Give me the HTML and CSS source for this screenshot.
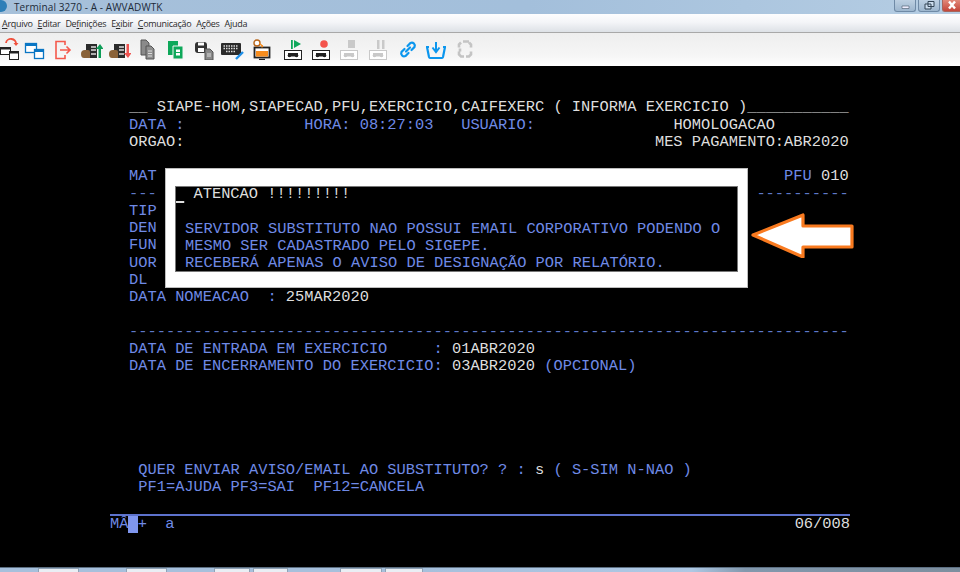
FILE: index.html
```html
<!DOCTYPE html>
<html lang="pt">
<head>
<meta charset="utf-8">
<title>Terminal 3270</title>
<link rel="stylesheet" href="styles.css">
</head>
<body>
<svg class="defs" width="0" height="0">
  <defs>
    <g id="server">
      <path d="M7 8h11v14H7z" fill="#2b2b2b"/>
      <path d="M12 11h5M12 14h5M12 18h5" stroke="#ddd" stroke-width="1.4"/>
      <path d="M2 18q0-4 4-4h3q2 0 2 2v6H5q-3 0-3-4z" fill="#8a6238"/>
    </g>
    <g id="tape">
      <rect x="3.500" y="15.500" width="17" height="9" fill="#fff" stroke="currentColor"/>
      <path d="M7 18h10v3.500H7z" fill="currentColor"/>
      <circle cx="8.500" cy="20.500" r="1.800" fill="currentColor"/>
      <circle cx="15.500" cy="20.500" r="1.800" fill="currentColor"/>
    </g>
  </defs>
</svg>
<header class="titlebar">
  <span class="appicon"></span>
  <span class="apptitle">Terminal 3270 - A - AWVADWTK</span>
  <div class="winctl">
    <span class="winbtn"><svg width="21" height="12"><path d="M7 7h7v2.500H7z" fill="#eef" stroke="#456" stroke-width=".6"/></svg></span>
    <span class="winbtn"><svg width="21" height="12"><path d="M9 2.500h6v5h-6zM6 5h6v5H6z" fill="#cde" stroke="#345"/></svg></span>
    <span class="winbtn close"><svg width="18" height="12"><path d="M6 2.500l6 7M12 2.500l-6 7" stroke="#fff" stroke-width="2.400"/></svg></span>
  </div>
</header>
<nav class="menubar">
  <span><u>A</u>rquivo</span><span><u>E</u>ditar</span><span>De<u>f</u>inições</span><span>E<u>x</u>ibir</span><span><u>C</u>omunicação</span><span>A<u>ç</u>ões</span><span>A<u>j</u>uda</span>
</nav>
<div class="toolbar">
  <span class="tool first"><svg width="24" height="24"><path d="M9 7a5 4.500 0 0 1 10 1" fill="none" stroke="#f0503c" stroke-width="1.800"/><path d="M16.500 7l2.500 3 2.500-3" fill="#f0503c"/><rect x="3.500" y="11.500" width="10" height="7" fill="#fff" stroke="#222"/><path d="M3 11h11v2.500H3z" fill="#222"/><rect x="12.500" y="15.500" width="9" height="8" fill="#fff" stroke="#222"/><path d="M12 15h10v2.500H12z" fill="#222"/></svg></span>
  <span class="tool"><svg width="24" height="24"><rect x="3.500" y="7.500" width="11" height="9" fill="#fff" stroke="#0a76c4" stroke-width="1.300"/><path d="M3 7h12v3H3z" fill="#0a76c4"/><rect x="12.500" y="13.500" width="9" height="9" fill="#fff" stroke="#0a76c4" stroke-width="1.300"/><path d="M12 13h10v3H12z" fill="#0a76c4"/></svg></span>
  <span class="tool"><svg width="24" height="24"><path d="M15 9V5.500H6v17h9V19M10 14h10M16.500 10.500L20 14l-3.500 3.500" fill="none" stroke="#f4594c" stroke-width="1.600"/></svg></span>
  <span class="tool"><svg width="24" height="24"><use href="#server"/><path d="M21 8l3.500 5H22v9h-2.500v-9H17z" fill="#0e9d58"/></svg></span>
  <span class="tool"><svg width="24" height="24"><use href="#server"/><path d="M21 22l3.500-5H22V8h-2.500v9H17z" fill="#ef5350"/></svg></span>
  <span class="tool"><svg width="24" height="24"><path d="M6 4h5l3 3v12H6z" fill="#8a8a8a" stroke="#555"/><path d="M11 10h5l3 3v10h-8z" fill="#8f8f8f" stroke="#555"/><path d="M13 15h4M13 17.500h4M13 20h4" stroke="#ddd"/></svg></span>
  <span class="tool"><svg width="24" height="24"><path d="M4 5h10v14H4z" fill="#0ea85a"/><path d="M9 10h10v13H9z" fill="#0ea85a" stroke="#f3f3f3"/><path d="M11.500 13h5v7h-5zM11.500 16.500h5" fill="#fff" stroke="#0ea85a"/></svg></span>
  <span class="tool"><svg width="24" height="24"><path d="M3 9q0-3 3-3h6q3 0 3 3v5q0 3-3 3H6q-3 0-3-3z" fill="#333"/><path d="M6 6.500h6v3H6zM6 12h6v4H6z" fill="#fff"/><path d="M13 13h5l3 3v8h-8z" fill="#888" stroke="#555"/><path d="M15 18h4M15 20h4" stroke="#ddd"/></svg></span>
  <span class="tool"><svg width="24" height="24"><rect x="1" y="7" width="20" height="12" rx="1" fill="#2b2b2b"/><path d="M3.500 10h15M3.500 12.500h15M6 15.500h10" stroke="#ddd" stroke-width="1.300" stroke-dasharray="1.500 1"/><path d="M16 23l7-7" stroke="#1d8fe8" stroke-width="2.400"/></svg></span>
  <span class="tool"><svg width="24" height="24"><rect x="5.500" y="11.500" width="15" height="10" fill="#fff" stroke="#222" stroke-width="1.800"/><path d="M7 15h12v5.500H7z" fill="#f78d1e"/><path d="M10 23.500h6" stroke="#222" stroke-width="1.400"/><circle cx="8" cy="7" r="3" fill="#fff" stroke="#b7651a" stroke-width="1.400"/><path d="M10 7l4 3-1 1.500" fill="#f78d1e" stroke="#f78d1e"/></svg></span>
  <span class="tool gap"><svg class="rec" width="24" height="26"><path d="M10 5h1.800v9H10z" fill="#0ea85a"/><path d="M13 5l7 4-7 4z" fill="#0ea85a"/><use href="#tape"/></svg></span>
  <span class="tool"><svg class="rec" width="24" height="26"><circle cx="15" cy="9" r="3.800" fill="#f4544c"/><use href="#tape"/></svg></span>
  <span class="tool"><svg class="rec off" width="24" height="26"><path d="M11 5h7v8h-7z" fill="#c9c9c9"/><use href="#tape"/></svg></span>
  <span class="tool"><svg class="rec off" width="24" height="26"><path d="M11 5h2.500v9H11zM16 5h2.500v9H16z" fill="#c9c9c9"/><use href="#tape"/></svg></span>
  <span class="tool gap2"><svg width="24" height="24"><path d="M10.500 14.500l4-4M9 12l-3 3a3 3 0 0 0 4 4l3-3M12 9l3-3a3 3 0 0 1 4 4l-3 3" transform="translate(-.5 1)" fill="none" stroke="#0b96ee" stroke-width="2.200" stroke-linecap="round"/></svg></span>
  <span class="tool"><svg width="24" height="24"><path d="M3 11l2 10q.3 1 1 1h12q.7 0 1-1l2-10" fill="none" stroke="#0b96ee" stroke-width="2.200"/><path d="M12 6v10M8.500 11.500L12 16l3.500-4.500" fill="none" stroke="#0b96ee" stroke-width="2"/><path d="M2 11h3M19 11h3" stroke="#0b96ee" stroke-width="2"/></svg></span>
  <span class="tool"><svg width="24" height="24"><path d="M8 7l-2 2v3M16 7l2 2v3M6 16v3l2 2h3M18 16v3l-2 2h-3M10 6h6M7 13v3" transform="translate(0 -.5)" fill="none" stroke="#c4c4c4" stroke-width="2.600"/></svg></span>
</div>
<main class="terminal">
  <div class="screen"><div class="row wht">__ SIAPE-HOM,SIAPECAD,PFU,EXERCICIO,CAIFEXERC ( INFORMA EXERCICIO )___________</div>
<div class="row">DATA :             HORA: 08:27:03   USUARIO:               <span class="wht">HOMOLOGACAO</span></div>
<div class="row wht">ORGAO:                                                   MES PAGAMENTO:ABR2020</div>
<div class="row"></div>
<div class="row split"><span>MAT</span><span>PFU <span class="wht">010</span></span></div>
<div class="row split dash"><span>---</span><span>----------</span></div>
<div class="row">TIP</div>
<div class="row">DEN</div>
<div class="row">FUN</div>
<div class="row">UOR</div>
<div class="row">DL</div>
<div class="row">DATA NOMEACAO  : <span class="wht">25MAR2020</span></div>
<div class="row"></div>
<div class="row dash">------------------------------------------------------------------------------</div>
<div class="row">DATA DE ENTRADA EM EXERCICIO     : <span class="wht">01ABR2020</span></div>
<div class="row">DATA DE ENCERRAMENTO DO EXERCICIO: <span class="wht">03ABR2020</span> (OPCIONAL)</div>
<div class="row"></div>
<div class="row"></div>
<div class="row"></div>
<div class="row"></div>
<div class="row"></div>
<div class="row"> QUER ENVIAR AVISO/EMAIL AO SUBSTITUTO? ? : <span class="wht">s</span> ( S-SIM N-NAO )</div>
<div class="row"> PF1=AJUDA PF3=SAI  PF12=CANCELA</div>
  </div>
  <footer class="status">
    <div class="row"><span>MÂ</span><span class="cursor"></span><span>+  a</span><span class="pos">06/008</span></div>
  </footer>
  <section class="popup">
    <div class="popup-inner">
      <div class="row wht"><span class="under"> </span> ATENCAO !!!!!!!!!</div>
      <div class="row"></div>
      <div class="row">SERVIDOR SUBSTITUTO NAO POSSUI EMAIL CORPORATIVO PODENDO O</div>
      <div class="row">MESMO SER CADASTRADO PELO SIGEPE.</div>
      <div class="row">RECEBERÁ APENAS O AVISO DE DESIGNAÇÃO POR RELATÓRIO.</div>
    </div>
  </section>
  <svg class="arrow" width="106" height="46" viewBox="0 0 106 46"><path d="M3 24L53 4v11h49v21H53v10z" transform="translate(0 -1)" fill="#fff" stroke="#f97a1f" stroke-width="3.200" stroke-linejoin="round"/></svg>
</main>
<div class="taskbar">
  <span class="task t1"></span><span class="task t2"></span><span class="task t3"></span><span class="task t4"></span><span class="task t5"></span><span class="task t6"></span><span class="rest"></span>
</div>
</body>
</html>
```

FILE: styles.css
```css
* { box-sizing: border-box; }
html, body { margin: 0; padding: 0; }
body {
  width: 960px;
  height: 572px;
  display: flex;
  flex-direction: column;
  overflow: hidden;
  background: #000;
  font-family: "Open Sans", "Noto Sans", "Liberation Sans", sans-serif;
}
.defs { position: absolute; }

.titlebar {
  height: 14px;
  flex: none;
  display: flex;
  align-items: center;
  background: linear-gradient(90deg, #a6c0da 0%, #a3bfdb 55%, #b5cde3 100%);
  background-color: #a8c2dc;
  color: #1d2a38;
  font-size: 10px;
  letter-spacing: .1px;
}
.appicon {
  width: 7px;
  height: 12px;
  margin-right: 7px;
  border-radius: 0 6px 6px 0;
  background: #2f7fb8;
  align-self: flex-start;
}
.apptitle { white-space: nowrap; line-height: 14px; }
.winctl { margin-left: auto; display: flex; gap: 2px; align-self: flex-start; }
.winbtn {
  display: block;
  width: 22px;
  height: 12px;
  border: 1px solid #6f8aa6;
  border-top: 0;
  border-radius: 0 0 3px 3px;
  background: linear-gradient(#bdd0e2, #9db6ce);
}
.winbtn svg { display: block; margin-top: -1px; }
.winbtn.close {
  width: 18px;
  background: linear-gradient(#e2897a, #c4463a);
  border-color: #a8655c;
  border-right: 0;
  border-radius: 0 0 0 3px;
}

.menubar {
  height: 19px;
  flex: none;
  display: flex;
  gap: 5px;
  align-items: center;
  padding: 0 0 0 2px;
  background: linear-gradient(#fdfdfe 0%, #f4f5f8 45%, #dde1e6 100%);
  border-bottom: 1px solid #a8a8a8;
  color: #2b2b2b;
  font-size: 9px;
  letter-spacing: -.3px;
  white-space: nowrap;
}

.toolbar {
  height: 33px;
  flex: none;
  display: flex;
  align-items: flex-start;
  padding-top: 3px;
  background: linear-gradient(#eeeeee, #f6f6f6 70%, #fff);
}
.tool {
  display: flex;
  justify-content: center;
  flex: none;
  width: 28.3px;
  height: 24px;
}
.tool.first { width: 23px; margin-left: -3px; }
.tool.gap { margin-left: 4px; }
.tool.gap2 { margin-left: 2px; }
.tool svg { display: block; flex: none; }
.rec { color: #222; margin-top: -1px; }
.rec.off { color: #c9c9c9; }

.terminal {
  position: relative;
  flex: 1;
  padding: 33.4px 0 0 129px;
  background: #000;
  color: #6f8ae6;
  font-family: "Liberation Mono", "DejaVu Sans Mono", monospace;
  font-size: 15.38px;
}
.row { height: 17.25px; line-height: 17.25px; white-space: pre; }
.split { display: flex; justify-content: space-between; width: 78ch; }
.wht { color: #dedede; }
.dash { color: #5f78c8; }

.status {
  margin: 17.500px 0 0 -19px;
  width: 740px;
  border-top: 2px solid #5d72cc;
}
.status .row { display: flex; line-height: 16px; height: 17px; }
.cursor {
  display: block;
  width: 9.230px;
  height: 17px;
  background: #7f96ee;
}
.pos { margin-left: auto; color: #dedede; }

.popup {
  position: absolute;
  left: 165px;
  top: 102px;
  width: 583px;
  height: 120px;
  padding: 17px 9px 17px 9px;
  background: #fff;
  border: 1px solid #bdbdbd;
}
.popup-inner {
  height: 86px;
  padding-left: 10px;
  background: #000;
  outline: 1px solid #777;
  outline-offset: -1px;
}
.under {
  text-decoration: underline;
  text-decoration-thickness: 1.500px;
  text-underline-offset: 3px;
  margin-left: -10px;
}

.arrow {
  position: absolute;
  left: 750px;
  top: 146px;
}

.taskbar {
  height: 5px;
  flex: none;
  display: flex;
  background: #a6c0dc;
  border-top: 1px solid #5c6f82;
}
.task { display: block; height: 4px; background: #e9eef4; border: 1px solid #8fa2b5; border-bottom: 0; }
.t1 { width: 41px; margin-left: 38px; }
.t2 { width: 41px; margin-left: 47px; }
.t3 { width: 36px; margin-left: 47px; }
.t4 { width: 35px; margin-left: 3px; }
.t5 { width: 42px; margin-left: 52px; }
.t6 { width: 38px; margin-left: 3px; }
.rest { flex: 1; background: linear-gradient(90deg, #a6c0dc 0%, #aec8e4 50%, #8298ad 60%, #7d8f9f 100%); }
```
